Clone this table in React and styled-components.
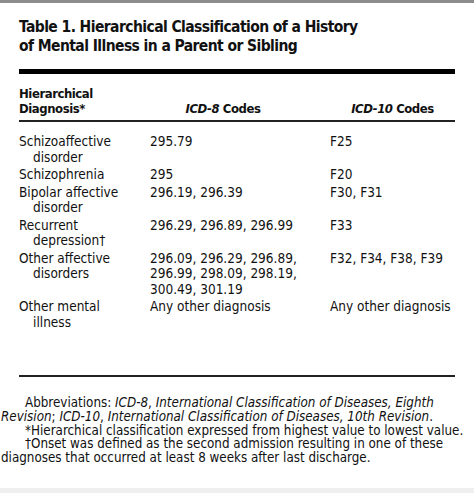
import styled, { createGlobalStyle } from "styled-components";

const Global = createGlobalStyle`
  html, body {
    margin: 0;
    padding: 0;
    background: #ffffff;
  }
`;

const FONT = `"Liberation Sans Narrow", "DejaVu Sans Condensed", "Liberation Sans", sans-serif`;

const rows = [
  { dx: "Schizoaffective disorder", icd8: "295.79", icd10: "F25" },
  { dx: "Schizophrenia", icd8: "295", icd10: "F20" },
  { dx: "Bipolar affective disorder", icd8: "296.19, 296.39", icd10: "F30, F31" },
  { dx: "Recurrent depression†", icd8: "296.29, 296.89, 296.99", icd10: "F33" },
  {
    dx: "Other affective disorders",
    icd8: "296.09, 296.29, 296.89, 296.99, 298.09, 298.19, 300.49, 301.19",
    icd10: "F32, F34, F38, F39",
  },
  { dx: "Other mental illness", icd8: "Any other diagnosis", icd10: "Any other diagnosis" },
];

export default function App() {
  return (
    <Page>
      <Global />
      <TopBar />
      <Content>
        <Title>
          Table 1. Hierarchical Classification of a History
          <br />
          of Mental Illness in a Parent or Sibling
        </Title>

        <Table>
          <colgroup>
            <col style={{ width: 131 }} />
            <col style={{ width: 180 }} />
            <col />
          </colgroup>
          <thead>
            <tr>
              <HeadCell>
                Hierarchical
                <br />
                Diagnosis*
              </HeadCell>
              <HeadCell center shift={34}>
                <i>ICD-8</i> Codes
              </HeadCell>
              <HeadCell center>
                <i>ICD-10</i> Codes
              </HeadCell>
            </tr>
          </thead>
          <tbody>
            {rows.map((r) => (
              <tr key={r.dx}>
                <Cell hanging>{r.dx}</Cell>
                <Cell>{r.icd8}</Cell>
                <Cell>{r.icd10}</Cell>
              </tr>
            ))}
          </tbody>
        </Table>
      </Content>

      <Notes>
        <p>
          Abbreviations: <i>ICD-8</i>, <i>International Classification of Diseases, Eighth</i>
          <br />
          <i>Revision</i>; <i>ICD-10</i>, <i>International Classification of Diseases, 10th Revision</i>.
        </p>
        <p>*Hierarchical classification expressed from highest value to lowest value.</p>
        <p>
          †Onset was defined as the second admission resulting in one of these
          <br />
          diagnoses that occurred at least 8 weeks after last discharge.
        </p>
      </Notes>

      <BottomBand />
    </Page>
  );
}

const Page = styled.div`
  width: 474px;
  height: 493px;
  overflow: hidden;
  display: flex;
  flex-direction: column;
  color: #111;
  font-family: ${FONT};
`;

const TopBar = styled.div`
  height: 3px;
  background: #8c8c8c;
  flex: none;
`;

const Content = styled.div`
  padding: 0 19px;
`;

const Title = styled.h1`
  margin: 15px 0 0;
  font-size: 15.5px;
  line-height: 19px;
  font-weight: 700;
  letter-spacing: -0.58px;
`;

const Table = styled.table`
  width: 100%;
  margin-top: 13px;
  border-collapse: collapse;
  border-top: 5px solid #000;
  table-layout: fixed;

  tbody tr:first-child td {
    padding-top: 12px;
  }

  tbody tr:last-child td {
    padding-bottom: 45px;
    border-bottom: 2px solid #222;
  }
`;

const HeadCell = styled.th`
  padding: 12px ${(p) => (p.shift ? `${p.shift}px` : "0")} 4px 0;
  text-align: ${(p) => (p.center ? "center" : "left")};
  vertical-align: bottom;
  font-size: 13px;
  line-height: 15px;
  font-weight: 700;
  letter-spacing: -0.45px;
  border-bottom: 2px solid #222;

  i {
    font-style: italic;
  }
`;

const Cell = styled.td`
  padding: 1px 12px 1px ${(p) => (p.hanging ? "14px" : "0")};
  text-indent: ${(p) => (p.hanging ? "-14px" : "0")};
  vertical-align: top;
  font-size: 13.5px;
  line-height: 15.5px;
  font-weight: 400;

  &:last-child {
    padding-right: 0;
  }
`;

const Notes = styled.div`
  padding: 19px 0 0 1px;
  font-size: 13.3px;
  line-height: 13.8px;

  p {
    margin: 0;
    text-indent: 24px;
    white-space: nowrap;
  }
`;

const BottomBand = styled.div`
  margin-top: auto;
  height: 5px;
  background: #efefef;
  flex: none;
`;
